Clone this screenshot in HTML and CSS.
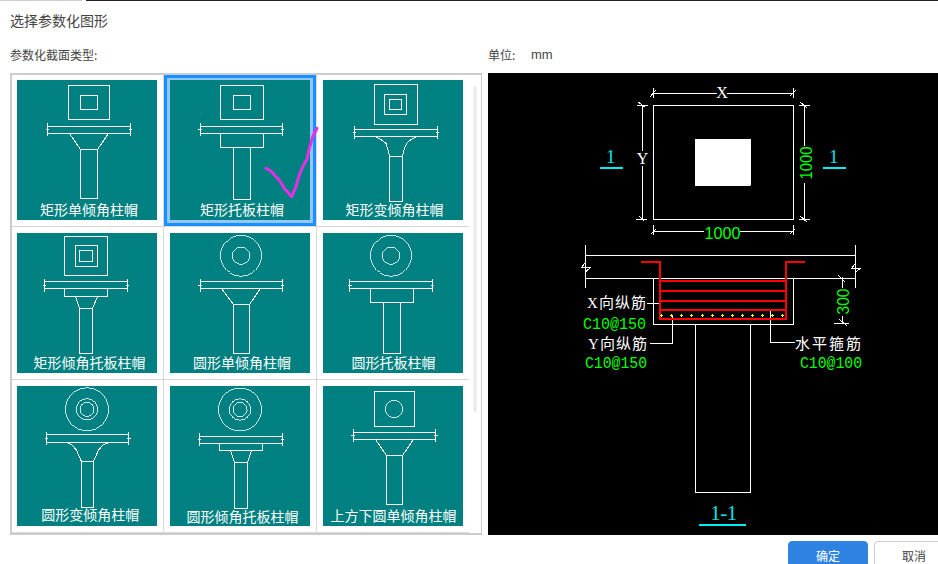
FILE: index.html
```html
<!DOCTYPE html>
<html lang="zh">
<head>
<meta charset="utf-8">
<title>选择参数化图形</title>
<link rel="stylesheet" href="styles.css">
</head>
<body>
<div class="dialog">
  <div class="strip"><span class="strip-a"></span><span class="strip-b"></span></div>
  <h1 class="title">选择参数化图形</h1>
  <div class="labels">
    <span class="label-type">参数化截面类型:</span>
    <span class="label-unit">单位:</span>
    <span class="label-mm">mm</span>
  </div>
  <div class="main">
    <div class="panel">
      <div class="grid">
        <div class="cell">
          <svg class="thumb" viewBox="0 0 140 140">
            <path class="ln" d="M51.5 5.5H92.5V39.5H51.5ZM63.5 15.5H80.5V29.5H63.5ZM30.5 42.5V56M113.5 42.5V56M30.5 46.5H113.5M30.5 53.5H113.5M29 49.5H32M112 49.5H115M52.5 53.5L63.5 69.5M91.5 53.5L80.5 69.5M63.5 69.5H80.5V118.5H63.5Z"/>
            <text class="cap" x="72" y="135">矩形单倾角柱帽</text>
          </svg>
        </div>
        <div class="cell selected">
          <svg class="thumb" viewBox="0 0 140 140">
            <path class="ln" d="M50.5 5.5H93.5V39.5H50.5ZM63.5 15.5H80.5V29.5H63.5ZM30.5 42.5V56M112.5 42.5V56M30.5 46.5H112.5M30.5 53.5H112.5M28 49.5H32M111 49.5H114M50.5 53.5H93.5V67.5H50.5ZM63.5 67.5H80.5V119.5H63.5Z"/>
            <text class="cap" x="72" y="135">矩形托板柱帽</text>
          </svg>
          <svg class="check" viewBox="0 0 60 80">
            <path d="M8 42.3L13 45L18 50.7L22 55L26.3 62.3L33.7 70.7L36 65L38 60.7L41 50L44.7 40.7L49 33L51.3 22.3L54.7 10.7L59 2.3"/>
          </svg>
        </div>
        <div class="cell last">
          <svg class="thumb" viewBox="0 0 140 140">
            <path class="ln" d="M51.5 4.5H94.5V44.5H51.5ZM61.5 14.5H83.5V34.5H61.5ZM66.5 19.5H78.5V29.5H66.5ZM31.5 46V58.5M114.5 46V58.5M31.5 49.5H114.5M31.5 56.5H114.5M30 52.5H33M113 52.5H116M52.5 56.5L58 59.5L63 63.5L65 70L66.5 76M93.5 56.5L88 59.5L83.5 63.5L81 70L79.5 76M66.5 76H79.5V121.5H66.5Z"/>
            <text class="cap" x="71.5" y="135">矩形变倾角柱帽</text>
          </svg>
        </div>
        <div class="cell">
          <svg class="thumb" viewBox="0 0 140 140">
            <path class="ln" d="M47.5 3.5H90.5V42.5H47.5ZM58.5 12.5H80.5V33.5H58.5ZM62.5 17.5H75.5V28.5H62.5ZM27.5 45.5V58.5M110.5 45.5V58.5M27.5 48.5H110.5M27.5 55.5H110.5M26 52.5H29M109 52.5H112M47.5 55.5H90.5V63.5H47.5ZM58.5 63.5L62.5 75.5M80.5 63.5L75.5 75.5M62.5 75.5H75.5V120.5H62.5Z"/>
            <text class="cap" x="72.5" y="134.5">矩形倾角托板柱帽</text>
          </svg>
        </div>
        <div class="cell">
          <svg class="thumb" viewBox="0 0 140 140">
            <circle class="ln" cx="71" cy="22.7" r="20.5"/>
            <circle class="ln" cx="71" cy="22.7" r="8.7"/>
            <path class="ln" d="M30.5 45.5V58.5M112.5 45.5V58.5M30.5 48.5H112.5M30.5 55.5H112.5M28 52.5H32M111 52.5H114M51.5 55.5L63.5 71.5M90.5 55.5L79.5 71.5M63.5 71.5H79.5V120.5H63.5Z"/>
            <text class="cap" x="72" y="134.5">圆形单倾角柱帽</text>
          </svg>
        </div>
        <div class="cell last">
          <svg class="thumb" viewBox="0 0 140 140">
            <circle class="ln" cx="68" cy="22.7" r="20.5"/>
            <circle class="ln" cx="68" cy="22.7" r="8.7"/>
            <path class="ln" d="M26.5 45.5V58.5M109.5 45.5V58.5M26.5 48.5H109.5M26.5 55.5H109.5M25 52.5H29M108 52.5H111M47.5 55.5H90.5V69.5H47.5ZM60.5 69.5H77.5V120.5H60.5Z"/>
            <text class="cap" x="70.5" y="134.5">圆形托板柱帽</text>
          </svg>
        </div>
        <div class="cell">
          <svg class="thumb" viewBox="0 0 140 140">
            <circle class="ln" cx="70" cy="23.3" r="21.5"/>
            <circle class="ln" cx="70" cy="23.3" r="10.7"/>
            <circle class="ln" cx="70" cy="23.3" r="7"/>
            <path class="ln" d="M29.5 45.5V58.5M111.5 45.5V58.5M29.5 48.5H111.5M29.5 56.5H111.5M28 52.5H31M110 52.5H114M50.5 56.5L55 59L59.5 64L62 70L64.5 75.5M91.5 56.5L86 59L81.5 64L79 70L76.5 75.5M64.5 75.5H76.5V121.5H64.5Z"/>
            <text class="cap" x="73.3" y="133.5">圆形变倾角柱帽</text>
          </svg>
        </div>
        <div class="cell">
          <svg class="thumb" viewBox="0 0 140 140">
            <circle class="ln" cx="70" cy="23.5" r="21.5"/>
            <circle class="ln" cx="70" cy="23.5" r="10.7"/>
            <circle class="ln" cx="70" cy="23.5" r="7"/>
            <path class="ln" d="M29.5 47V59.5M112.5 47V59.5M29.5 50.5H112.5M29.5 57.5H112.5M28 53.5H31M111 53.5H114M49.5 57.5H92.5V64.5H49.5ZM60.5 64.5L64.5 76.5M81.5 64.5L77.5 76.5M64.5 76.5H77.5V122.5H64.5Z"/>
            <text class="cap" x="72.5" y="135.5">圆形倾角托板柱帽</text>
          </svg>
        </div>
        <div class="cell last">
          <svg class="thumb" viewBox="0 0 140 140">
            <circle class="ln" cx="71" cy="23" r="8.7"/>
            <path class="ln" d="M51.5 5.5H91.5V40.5H51.5ZM30.5 42.5V55.5M112.5 42.5V55.5M30.5 46.5H112.5M30.5 53.5H112.5M28 49.5H32M111 49.5H115M52.5 53.5L63.5 69.5M90.5 53.5L79.5 69.5M63.5 69.5H79.5V118.5H63.5Z"/>
            <text class="cap" x="70.5" y="134.5">上方下圆单倾角柱帽</text>
          </svg>
        </div>
      </div>
      <div class="gutter"><span class="thumb-bar"></span></div>
    </div>
    <svg class="preview" viewBox="488 73 450 462">
      <rect class="bg" x="488" y="73" width="450" height="462"/>
      <path class="ln" d="M653.5 105.5H793.5V219.5H653.5Z"/>
      <path class="fill-w" d="M695 139H751V185L750 186H695Z"/>
      <path class="ln" d="M653.5 93.5H717M727 93.5H793.5M653.5 88V98M793.5 88V98M650 97L656 90M790 96L796 90"/>
      <path class="ln" d="M642.5 105.5V151M642.5 166V219.5M637 105.5H648M636 219.5H647M638 102L645 107M639 216L644 221"/>
      <path class="ln" d="M804.5 105.5V146M804.5 183V219.5M799 105.5H810M799 219.5H810M800 102L807 108M800 216L807 222"/>
      <path class="ln" d="M653.5 231.5H704M740 231.5H793.5M653.5 225V235M793.5 225V235M651 234L656 229M790 234L795 229"/>
      <text class="latin white" x="722" y="98" text-anchor="middle">X</text>
      <text class="latin white" x="642.5" y="164" text-anchor="middle">Y</text>
      <text class="dig" x="722.5" y="239" text-anchor="middle" textLength="36" lengthAdjust="spacingAndGlyphs">1000</text>
      <text class="dig" x="806" y="169" text-anchor="middle" textLength="33" lengthAdjust="spacingAndGlyphs" transform="rotate(-90 806 163)">1000</text>
      <text class="sec" x="610.7" y="163" text-anchor="middle">1</text>
      <text class="sec" x="833.7" y="163" text-anchor="middle">1</text>
      <path class="cy" d="M600 168H623M823 168H846M699 525H746"/>
      <path class="ln" d="M585.5 245V288M855.5 245V288M585.5 255.5H855.5M585.5 278.5H855.5M585.5 262L582 267H591L585.5 272M855.5 263L852 268H861L855.5 272M653.5 278.5V324.5H793.5V278.5M695.5 324.5V492.5H750.5V324.5"/>
      <path class="ln" d="M647 303.5H659M650 343.5H672.5V316M770.5 310V342.5H795"/>
      <path class="ln" d="M842.5 277V288M842.5 316V324M834 323.5H849M838 275L845 282M839 319L847 326"/>
      <path class="red" d="M641 261.5H660V319H786V261.5H805M660 280.5H786M660 290.5H786M660 300.5H786M660 310H786"/>
      <path class="yel" d="M660 315.5H663M661.5 314V317M670 315.5H673M671.5 314V317M680 315.5H683M681.5 314V317M690 315.5H693M691.5 314V317M701 315.5H704M702.5 314V317M711 315.5H714M712.5 314V317M721 315.5H724M722.5 314V317M731 315.5H734M732.5 314V317M741 315.5H744M742.5 314V317M751 315.5H754M752.5 314V317M761 315.5H764M762.5 314V317M771 315.5H774M772.5 314V317M781 315.5H784M782.5 314V317"/>
      <text class="dig" x="843" y="307" text-anchor="middle" textLength="26" lengthAdjust="spacingAndGlyphs" transform="rotate(-90 843 301.5)">300</text>
      <text class="note" x="587" y="308" textLength="59">X向纵筋</text>
      <text class="code" x="583" y="329" textLength="63" lengthAdjust="spacingAndGlyphs">C10@150</text>
      <text class="note" x="588" y="348.5" textLength="59">Y向纵筋</text>
      <text class="code" x="585" y="368" textLength="62" lengthAdjust="spacingAndGlyphs">C10@150</text>
      <text class="note" x="795" y="348.5" textLength="66">水平箍筋</text>
      <text class="code" x="800" y="368" textLength="62" lengthAdjust="spacingAndGlyphs">C10@100</text>
      <text class="sec big" x="723.7" y="520" text-anchor="middle" textLength="27">1-1</text>
    </svg>
  </div>
  <div class="footer">
    <button class="btn primary" type="button">确定</button>
    <button class="btn" type="button">取消</button>
  </div>
</div>
</body>
</html>
```

FILE: styles.css
```css
html, body {
  margin: 0;
  padding: 0;
  height: 100%;
  overflow: hidden;
  background: #fff;
}

.dialog {
  width: 938px;
  height: 564px;
  font-family: "Noto Sans CJK SC", "Noto Sans", sans-serif;
  color: #444;
}

.strip {
  display: flex;
  gap: 4px;
  height: 1px;
}
.strip-a { width: 82px; background: #ccc; }
.strip-b { flex: 1; background: #222; }

.title {
  margin: 0;
  height: 38px;
  padding-left: 10px;
  font-size: 14px;
  font-weight: 400;
  line-height: 38px;
}

.labels {
  display: flex;
  align-items: center;
  height: 30px;
  margin-bottom: 4px;
  padding-left: 10px;
  font-size: 12px;
}
.label-type { width: 478px; }
.label-unit { width: 43px; }
.label-mm { font-family: "Liberation Sans", sans-serif; font-size: 13px; }

.main {
  display: flex;
  gap: 6px;
  padding-left: 10px;
}

.panel {
  display: flex;
  box-sizing: border-box;
  width: 472px;
  height: 462px;
  border: 2px solid #ccc;
  border-right-width: 1px;
}

.grid {
  display: grid;
  grid-template-columns: 152px 153px 152px;
  grid-template-rows: 152px 153px 153px;
  width: 457px;
}

.cell {
  position: relative;
  box-sizing: border-box;
  padding: 6px;
  border-right: 1px solid #d8d8d8;
  border-bottom: 1px solid #d8d8d8;
}
.cell:nth-child(3n+1) { padding-left: 5px; }
.cell:nth-child(-n+3) { padding-top: 5px; }
.cell.last { border-right: 0; }

.cell.selected {
  box-shadow: inset 0 0 0 3px #1890ff, inset 0 0 0 6px #91c8ff;
}

.thumb {
  display: block;
  width: 140px;
  height: 140px;
  background: #008080;
}

.ln {
  fill: none;
  stroke: #fff;
  stroke-width: 1;
  shape-rendering: crispEdges;
}
circle.ln { stroke-width: 0.8; }

.cap {
  fill: #fff;
  font-size: 14px;
  text-anchor: middle;
}

.check {
  position: absolute;
  left: 94px;
  top: 51px;
  width: 60px;
  height: 80px;
  overflow: visible;
}
.check path {
  fill: none;
  stroke: #e62ee6;
  stroke-width: 3;
  stroke-linecap: round;
  stroke-linejoin: round;
}

.gutter {
  flex: 1;
  padding: 11px 0 0 4px;
}
.thumb-bar {
  display: block;
  width: 4px;
  height: 326px;
  border-radius: 2px;
  background: #ececec;
}

.preview {
  display: block;
  width: 450px;
  height: 462px;
}
.bg { fill: #000; }
.fill-w { fill: #fff; }

.cy {
  fill: none;
  stroke: #00f0f0;
  stroke-width: 2;
  shape-rendering: crispEdges;
}
.red {
  fill: none;
  stroke: #f00;
  stroke-width: 2;
  shape-rendering: crispEdges;
}
.yel {
  fill: none;
  stroke: #ff0;
  stroke-width: 1;
  shape-rendering: crispEdges;
}

.latin {
  font-family: "Liberation Serif", serif;
  font-size: 16px;
}
.white { fill: #fff; }

.dig {
  fill: #0f0;
  font-family: "Liberation Sans", sans-serif;
  font-size: 17px;
}

.sec {
  fill: #00e5e5;
  font-family: "Liberation Serif", serif;
  font-size: 19px;
}
.sec.big { font-size: 21px; }

.note {
  fill: #fff;
  font-family: "Liberation Serif", "Noto Sans CJK SC", serif;
  font-size: 15px;
}

.code {
  fill: #0f0;
  font-family: "Liberation Mono", monospace;
  font-size: 16px;
}

.footer {
  display: flex;
  justify-content: flex-end;
  gap: 6px;
  margin-top: 6px;
  margin-right: -16px;
}

.btn {
  box-sizing: border-box;
  width: 80px;
  height: 28px;
  padding: 0;
  border: 1px solid #ccc;
  border-radius: 4px;
  background: #fff;
  color: #444;
  font-family: "Noto Sans CJK SC", sans-serif;
  font-size: 12px;
}
.btn.primary {
  border-color: #2e83e2;
  background: #2e83e2;
  color: #fff;
}
```
